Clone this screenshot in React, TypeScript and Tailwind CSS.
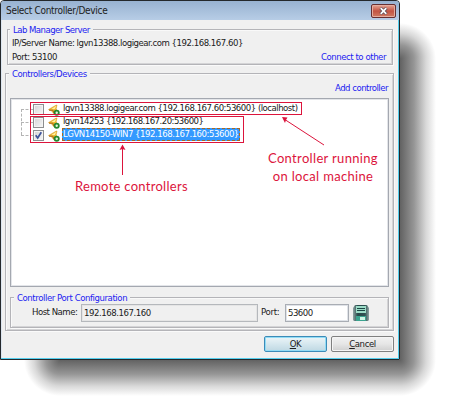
import type { ReactNode } from "react";

const LINK = "text-[#1c1cf0]";

function Group({ label, labelClass, className, children }: { label: string; labelClass: string; className: string; children: ReactNode }) {
  return (
    <section className={`relative border border-[#b4b4b8] shadow-[inset_1px_1px_0_#f9f9f9,inset_-1px_-1px_0_#d4d4d6,1px_1px_0_#fafafa] ${className}`}>
      <span className={`absolute -top-[7px] bg-[#f0f0f0] px-[3px] leading-[13px] ${LINK} ${labelClass}`}>{label}</span>
      {children}
    </section>
  );
}

function ControllerIcon() {
  return (
    <svg className="ml-[4px] h-[12px] w-[12px] shrink-0" viewBox="0 0 12 12">
      <path d="M.5 5.500 8 1.200 9 1l-.8 3.500L9 7 5.500 9.500 3.800 7Z" fill="#edb72e" stroke="#d89018" strokeWidth=".5" />
      <path d="M3 5.200 8.300 1.800 7 5Z" fill="#fff0a0" />
      <path d="M1 6.200h3.800L6 9" fill="none" stroke="#a96818" strokeWidth="1" />
      <circle cx="8.700" cy="8.800" r="3" fill="#24862e" />
      <circle cx="8.700" cy="8.800" r="1.200" fill="#dff8d8" />
    </svg>
  );
}

function Row({ text, checked, textClass }: { text: string; checked?: boolean; textClass: string }) {
  return (
    <div className="flex h-[13px] items-center">
      <span className="w-[12px] shrink-0 border-t border-dashed border-[#b4b4b4]" />
      <span className="flex h-[11px] w-[11px] shrink-0 items-center justify-center border border-[#8d8e90] bg-gradient-to-br from-[#d4d4d6] to-[#f7f7f7] shadow-[inset_0_0_0_1px_#f4f4f4]">
        {checked && (
          <svg className="h-[9px] w-[9px]" viewBox="0 0 9 9">
            <path d="M1.700 4.200 3.700 7 7.300 1.300" fill="none" stroke="#3c529c" strokeWidth="1.700" />
          </svg>
        )}
      </span>
      <ControllerIcon />
      <span className={`mb-[2px] ml-[2px] h-[13px] whitespace-nowrap px-px leading-[12px] ${textClass}`}>{text}</span>
    </div>
  );
}

function SaveIcon() {
  return (
    <svg className="ml-[4px] h-[16px] w-[16px]" viewBox="0 0 16 16">
      <defs>
        <linearGradient id="disk" x1="0" y1="0" x2="1" y2="0">
          <stop stopColor="#8fa3a3" />
          <stop offset=".3" stopColor="#27494a" />
          <stop offset=".75" stopColor="#2f5252" />
          <stop offset="1" stopColor="#8fa3a3" />
        </linearGradient>
      </defs>
      <path d="M2 0h12l2 3v12l-1 1H1l-1-1V3Z" fill="url(#disk)" />
      <path d="M3 1h10v7H3Z" fill="#9cdcc7" />
      <path d="M4 3.500h8M4 5.500h8" stroke="#1d4745" strokeWidth="1" />
      <path d="M3 11h10v5H3Z" fill="#3ba38f" />
      <path d="M7 12h5v3H7Z" fill="#cff5e5" />
    </svg>
  );
}

export default function App() {
  return (
    <div className="relative h-[420px] w-[460px] overflow-hidden bg-white font-['DejaVu_Sans_Condensed','DejaVu_Sans',sans-serif] text-[9.5px] text-[#202020]">
      <div className="absolute top-[23px] left-[400px] h-[36px] w-[36px] bg-[radial-gradient(circle_at_0_100%,#626262_0,#969696_14px,#d8d8d8_26px,#fff_36px)]" />
      <div className="absolute top-[59px] left-[400px] h-[301px] w-[36px] bg-[linear-gradient(to_right,#626262_0,#969696_14px,#d8d8d8_26px,#fff_36px)]" />
      <div className="absolute top-[360px] left-[400px] h-[36px] w-[36px] bg-[radial-gradient(circle_at_0_0,#626262_0,#969696_14px,#d8d8d8_26px,#fff_36px)]" />
      <div className="absolute top-[360px] left-[60px] h-[36px] w-[340px] bg-[linear-gradient(to_bottom,#626262_0,#969696_14px,#d8d8d8_26px,#fff_36px)]" />
      <div className="absolute top-[360px] left-[24px] h-[36px] w-[36px] bg-[radial-gradient(circle_at_100%_0,#626262_0,#969696_14px,#d8d8d8_26px,#fff_36px)]" />

      <main className="relative flex h-[360px] w-[400px] flex-col rounded-t-[4px] border border-[#24282c] bg-[#f0f0f0] shadow-[inset_-1px_-1px_0_#55cfee,inset_1px_0_0_#dce5ef]">
        <header className="flex h-[19px] shrink-0 items-center rounded-t-[3px] bg-gradient-to-b from-[#98b2d1] to-[#b7cde6] pr-[3px] pl-[5px]">
          <h1 className="grow text-[10px] tracking-[-0.3px]">Select Controller/Device</h1>
          <button className="flex h-[14px] w-[25px] items-center justify-center rounded-[2px] border border-[#672f31] bg-gradient-to-b from-[#e5a596] via-[#c35443] via-50% to-[#cf7a62] shadow-[inset_0_0_0_1px_#e5ad9f]">
            <svg className="h-[8px] w-[9px]" viewBox="0 0 9 8">
              <path d="m1.500 1 6 6m0-6-6 6" stroke="#5c4c55" strokeWidth="3.200" />
              <path d="m1.700 1.200 5.600 5.600m0-5.600L1.700 6.800" stroke="#fff" strokeWidth="1.700" />
            </svg>
          </button>
        </header>

        <Group label="Lab Manager Server" labelClass="left-[2px] tracking-[-0.53px]" className="mt-[9px] mr-[6px] ml-[6px] h-[36px] shrink-0 px-[4px] pt-[6px]">
          <p className="h-[14px] leading-[14px] tracking-[-0.47px]">IP/Server Name: lgvn13388.logigear.com {"{192.168.167.60}"}</p>
          <div className="flex justify-between pr-[2px] leading-[14px]">
            <span className="tracking-[-0.43px]">Port: 53100</span>
            <a className={`tracking-[-0.44px] ${LINK}`}>Connect to other</a>
          </div>
        </Group>

        <Group label="Controllers/Devices" labelClass="left-[3px] tracking-[-0.44px]" className="mt-[8px] mr-[5px] ml-[4px] flex h-[258px] shrink-0 flex-col px-[4px]">
          <div className="flex h-[24px] shrink-0 justify-end pt-[7px] pr-px">
            <a className={`leading-[14px] tracking-[-0.5px] ${LINK}`}>Add controller</a>
          </div>
          <div className="relative h-[189px] shrink-0 border border-[#a4a8b0] bg-white pt-[4px] pl-[10px] shadow-[inset_0_0_0_1px_#e3e5e9]">
            <div className="absolute top-[10px] left-[10px] h-[26px] border-l border-dashed border-[#b4b4b4]" />
            <Row text="lgvn13388.logigear.com {192.168.167.60:53600} (localhost)" textClass="tracking-[-0.49px]" />
            <Row text="lgvn14253 {192.168.167.20:53600}" textClass="tracking-[-0.52px]" />
            <Row checked text="LGVN14150-WIN7 {192.168.167.160:53600}" textClass="bg-[#3399ff] text-white tracking-[-0.46px] outline outline-dashed outline-[#a86823] -outline-offset-1" />
          </div>
          <Group label="Controller Port Configuration" labelClass="left-[3px] tracking-[-0.42px]" className="mt-[10px] flex h-[31px] shrink-0 items-center pl-[21px]">
            <span className="w-[49px] tracking-[-0.5px]">Host Name:</span>
            <span className="h-[18px] w-[177px] border border-[#b5b8bc] pl-[2px] leading-[16px] tracking-[-0.44px] shadow-[inset_0_0_0_1px_#e5e5e5]">192.168.167.160</span>
            <span className="ml-[3px] w-[24px] tracking-[-0.3px]">Port:</span>
            <span className="h-[18px] w-[64px] border border-[#a9adb4] bg-white pl-[2px] leading-[16px] tracking-[-0.5px] shadow-[inset_0_0_0_1px_#e0e3e8]">53600</span>
            <SaveIcon />
          </Group>
        </Group>

        <footer className="mt-[5px] mr-[5px] flex justify-end gap-[4px]">
          <button className="h-[16px] w-[63px] rounded-[2px] border border-[#3c8bb8] bg-gradient-to-b from-[#edf5f8] via-[#d5e7ee] to-[#bfd8e3] leading-[14px] tracking-[-0.4px] shadow-[inset_0_0_0_1px_#92dcf5]"><u>O</u>K</button>
          <button className="h-[16px] w-[63px] rounded-[2px] border border-[#808080] bg-gradient-to-b from-[#f2f2f2] via-[#e6e6e6] to-[#cfcfcf] leading-[14px] tracking-[-0.4px] shadow-[inset_0_0_0_1px_#f5f5f5]"><u>C</u>ancel</button>
        </footer>
      </main>

      <div className="absolute top-[102px] left-[30px] h-[13px] w-[272px] border border-[#dc143c]" />
      <div className="absolute top-[116px] left-[30px] h-[27px] w-[214px] border border-[#dc143c]" />
      <svg className="absolute top-0 left-0 h-[420px] w-[460px]" viewBox="0 0 460 420">
        <path d="M122.500 175v-29M324 145l-40-26" stroke="#dc143c" strokeWidth="1" />
        <path d="m122.500 144.500 3 5.500-3-1-3 1ZM282 117l5.500.5-1.500 2.500-1 3Z" fill="#dc143c" />
      </svg>
      <p className="absolute top-[177px] left-[75px] whitespace-nowrap font-['Comic_Sans_MS','Lato',sans-serif] text-[13px] leading-[18px] tracking-[0.28px] text-[#dc143c]">Remote controllers</p>
      <p className="absolute top-[149px] left-[262px] w-[122px] whitespace-nowrap text-center font-['Comic_Sans_MS','Lato',sans-serif] text-[13px] leading-[18px] tracking-[0.33px] text-[#dc143c]">Controller running<br />on local machine</p>
    </div>
  );
}
